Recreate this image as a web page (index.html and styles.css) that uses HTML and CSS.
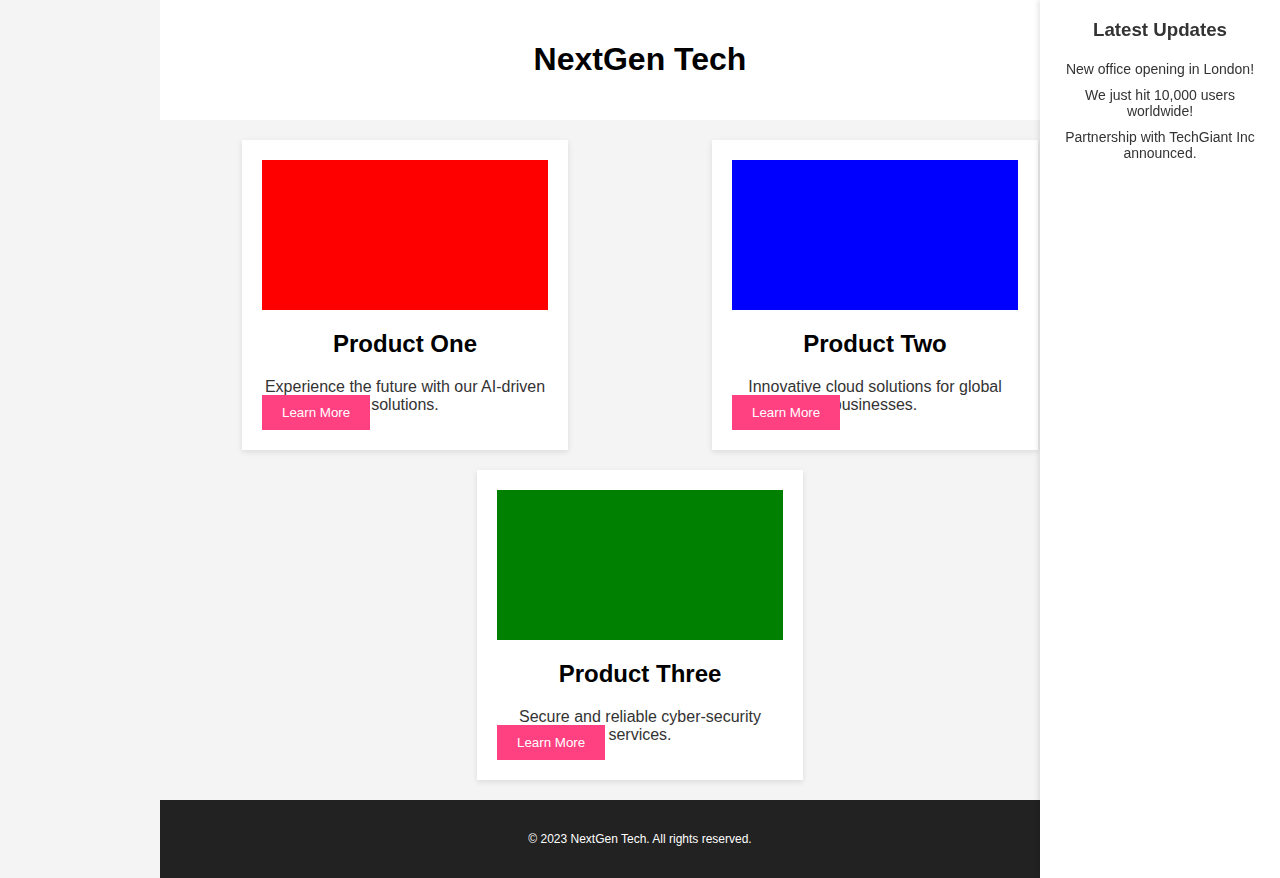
FILE: index.html
```html
<!DOCTYPE html>
<html lang="en">
<head>
<meta charset="utf-8">
<title>NextGen Tech</title>
<link rel="stylesheet" href="styles.css">
</head>
<body>
<div class="page">
  <header class="site-header">
    <h1>NextGen Tech</h1>
  </header>
  <main class="products">
    <div class="card">
      <div class="card-image red"></div>
      <h2>Product One</h2>
      <p>Experience the future with our AI-driven solutions.</p>
      <button class="btn">Learn More</button>
    </div>
    <div class="card">
      <div class="card-image blue"></div>
      <h2>Product Two</h2>
      <p>Innovative cloud solutions for global businesses.</p>
      <button class="btn">Learn More</button>
    </div>
    <div class="card">
      <div class="card-image green"></div>
      <h2>Product Three</h2>
      <p>Secure and reliable cyber-security services.</p>
      <button class="btn">Learn More</button>
    </div>
  </main>
  <footer class="site-footer">
    <p>&copy; 2023 NextGen Tech. All rights reserved.</p>
  </footer>
</div>
<aside class="sidebar">
  <h3>Latest Updates</h3>
  <ul class="updates">
    <li>New office opening in London!</li>
    <li>We just hit 10,000 users worldwide!</li>
    <li>Partnership with TechGiant Inc announced.</li>
  </ul>
</aside>
</body>
</html>
```

FILE: styles.css
```css
html, body {
  margin: 0;
  padding: 0;
}
body {
  background: #f4f4f4;
  font-family: "Liberation Sans", Arial, sans-serif;
  color: #333;
}
.page {
  width: 960px;
  margin: 0 auto;
}
.site-header {
  background: #fff;
  padding: 20px;
  text-align: center;
}
.site-header h1 {
  margin: 21.44px 0;
  font-size: 32px;
  color: #000;
}
.products {
  display: flex;
  flex-wrap: wrap;
  justify-content: space-around;
  gap: 20px;
  padding: 20px;
}
.card {
  position: relative;
  width: 286px;
  padding: 20px;
  background: #fff;
  box-shadow: 0 2px 6px rgba(0, 0, 0, 0.1);
  text-align: center;
}
.card-image {
  height: 150px;
}
.red { background: #ff0000; }
.blue { background: #0000ff; }
.green { background: #008000; }
.card h2 {
  margin: 19.92px 0;
  font-size: 24px;
  color: #000;
}
.card p {
  margin: 16px 0;
  font-size: 16px;
  color: #333;
}
.btn {
  position: absolute;
  left: 20px;
  bottom: 20px;
  background: #ff4081;
  color: #fff;
  border: none;
  padding: 10px 20px;
  font-family: "Liberation Sans", Arial, sans-serif;
  font-size: 13.33px;
  cursor: pointer;
}
.site-footer {
  background: #222;
  color: #fff;
  text-align: center;
  padding: 20px;
}
.site-footer p {
  margin: 12px 0;
  font-size: 12px;
}
.sidebar {
  position: fixed;
  top: 0;
  right: 0;
  width: 200px;
  height: 100%;
  padding: 0 20px;
  background: #fff;
  box-shadow: -2px 0 5px rgba(0, 0, 0, 0.1);
  text-align: center;
}
.sidebar h3 {
  margin: 18.72px 0;
  font-size: 18.72px;
}
.updates {
  list-style: none;
  margin: 0;
  padding: 0;
  font-size: 14px;
}
.updates li {
  margin-bottom: 10px;
}
.updates li:first-child {
  margin-top: 20px;
}
```
